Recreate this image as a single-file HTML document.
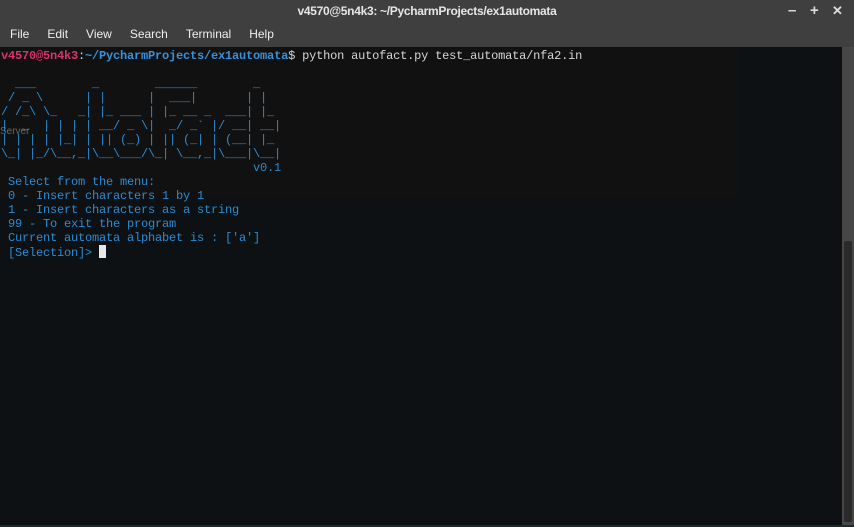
<!DOCTYPE html>
<html><head><meta charset="utf-8"><style>
*{margin:0;padding:0}
body{width:854px;height:527px;background:#3f3f3f;overflow:hidden;position:relative;font-family:"Liberation Sans",sans-serif}
.title{position:absolute;left:0;top:0;width:854px;height:22px;text-align:center;color:#e6e6e6;font-size:12px;font-weight:bold;line-height:22px;letter-spacing:-0.3px}
.wc{position:absolute;top:0;color:#ddd;font-size:15px;font-weight:bold;line-height:22px}
.menu{position:absolute;top:25px;left:10px;color:#eee;font-size:12px;line-height:18px}
.menu span{margin-right:18px}
.term{position:absolute;left:0;top:47px;width:842px;height:478px;background:#0d1113}
.ghost{position:absolute;left:0;top:0;width:738px;height:150px;background:#121111}
.sb{position:absolute;left:842px;top:47px;width:12px;height:480px;background:#474747}
.thumb{position:absolute;left:844px;top:241px;width:8px;height:281px;background:#2a2a2a;border-radius:2px}
.bot{position:absolute;left:0;top:525px;width:854px;height:2px;background:#1c2a2c}
pre{position:absolute;left:1px;top:2px;font-family:"Liberation Mono",monospace;font-size:12px;letter-spacing:-0.2px;line-height:14px;color:#2a8bd2;white-space:pre}
.u{color:#d8336b;font-weight:bold}.p{color:#3591dc;font-weight:bold}.w{color:#d6d6d6}
.cur{display:inline-block;width:7px;height:13px;background:#e8e8e8;vertical-align:-2px}
.srv{position:absolute;left:0;top:79px;color:#666;font-size:10px;font-family:"Liberation Sans",sans-serif}
</style></head><body>
<div class="title">v4570@5n4k3: ~/PycharmProjects/ex1automata</div>
<div class="wc" style="left:788px">–</div><div class="wc" style="left:810px">+</div><div class="wc" style="left:832px;font-size:13px">✕</div>
<div class="menu"><span>File</span><span>Edit</span><span>View</span><span>Search</span><span>Terminal</span><span>Help</span></div>
<div class="term"><div class="ghost"></div><div class="srv">Server</div>
<pre><span class="u">v4570@5n4k3</span><span class="w">:</span><span class="p">~/PycharmProjects/ex1automata</span><span class="w">$ python autofact.py test_automata/nfa2.in</span>

  ___        _        ______        _
 / _ \      | |      |  ___|       | |
/ /_\ \_   _| |_ ___ | |_ __ _  ___| |_
|  _  | | | | __/ _ \|  _/ _` |/ __| __|
| | | | |_| | || (_) | || (_| | (__| |_
\_| |_/\__,_|\__\___/\_| \__,_|\___|\__|
                                    v0.1
 Select from the menu:
 0 - Insert characters 1 by 1
 1 - Insert characters as a string
 99 - To exit the program
 Current automata alphabet is : ['a']
 [Selection]> <span class="cur"></span></pre></div>
<div class="sb"></div><div class="thumb"></div><div class="bot"></div>
</body></html>
